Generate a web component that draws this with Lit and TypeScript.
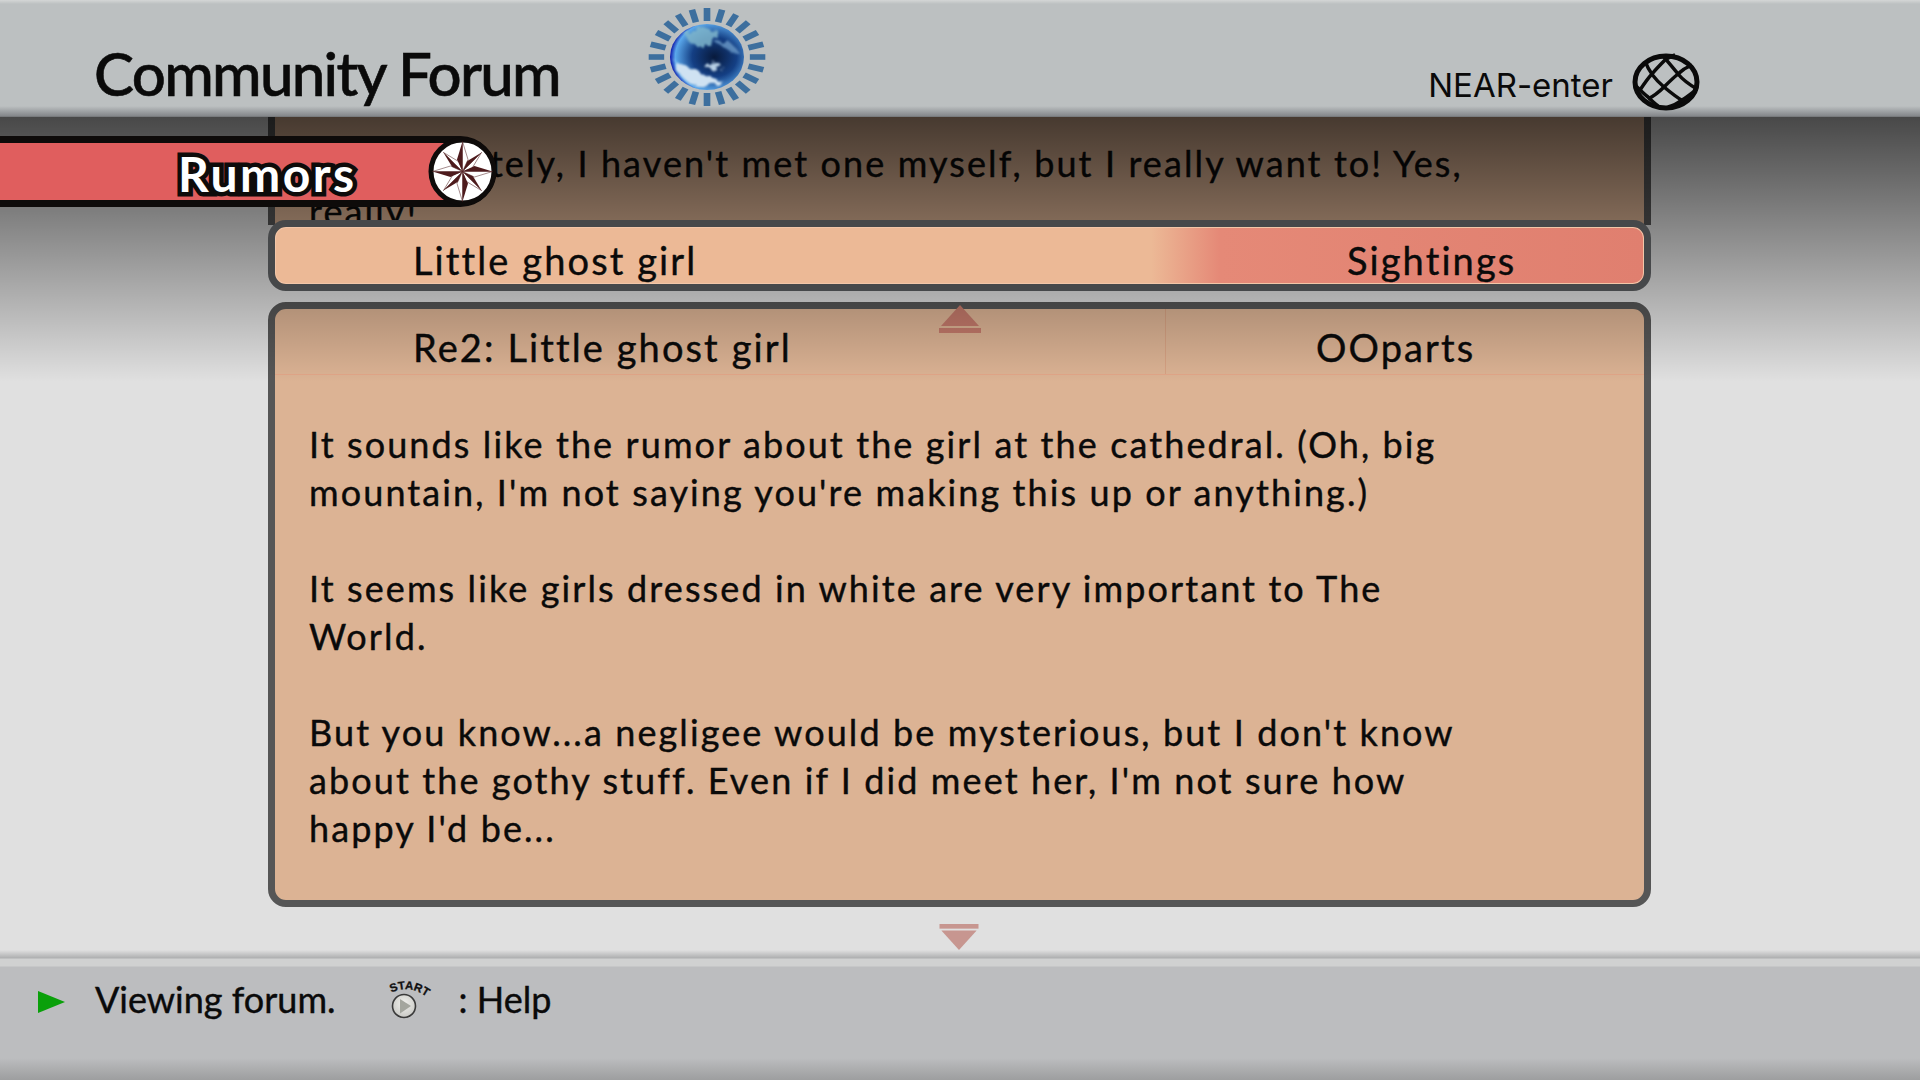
import { LitElement, html, css, svg } from 'lit';
import { customElement } from 'lit/decorators.js';

const range = (n: number) => Array.from({ length: n }, (_, i) => i);

// 24 ticks round the earth logo, squashed to an ellipse by the group scale
const earthRays = range(24).map((i) => {
  const a = (i * 360) / 24;
  return svg`<rect x="-2.800" y="-49" width="5.600" height="13" fill="#3d6f9e" transform="rotate(${a})"></rect>`;
});

// compass star: two-tone blades, diagonals first so the long axes sit on top
const blade = (i: number) => {
  const long = i % 2 === 0;
  const r = long ? 30 : 27;
  const w = long ? 5.5 : 4.5;
  const h = long ? 12 : 9;
  return svg`<g transform="rotate(${i * 45})">
    <path d="M0 0 L0 ${-r} L${w} ${-h} Z" fill="#fff" stroke="#4d1a1c" stroke-width=".5"></path>
    <path d="M0 0 L0 ${-r} L${-w} ${-h} Z" fill="#4d1a1c"></path>
  </g>`;
};
const compassBlades = [1, 3, 5, 7, 0, 2, 4, 6].map(blade);

@customElement('app-root')
export class AppRoot extends LitElement {
  static styles = css`
    :host {
      display: block;
      width: 1920px;
      height: 1080px;
      font-family: Lato, 'Noto Sans', sans-serif;
      color: #0a0a0a;
    }
    .stage {
      position: relative;
      width: 1920px;
      height: 1080px;
      overflow: hidden;
      display: flex;
      flex-direction: column;
      background: #e0e0e0;
    }

    /* Header */
    .header {
      position: relative;
      z-index: 5;
      flex: 0 0 117px;
      box-sizing: border-box;
      padding: 0 0 0 94px;
      display: flex;
      align-items: flex-start;
      background: linear-gradient(#d4d6d6 0, #bcc0c1 4px, #bcc0c1 106px, #84878a 116px, #6c6e70 117px);
    }
    .title {
      font-size: 60px;
      font-weight: 500;
      line-height: 74px;
      margin-top: 36px;
      width: 554px;
      flex: none;
      letter-spacing: -1.7px;
      -webkit-text-stroke: 0.6px #0a0a0a;
    }
    .earth {
      width: 118px;
      height: 100px;
      margin-top: 7px;
      flex: none;
    }
    .near {
      margin-left: auto;
      display: flex;
      align-items: center;
      margin-top: 52px;
      margin-right: 219px;
      gap: 18px;
      font-family: Inter, sans-serif;
      font-size: 33px;
    }
    .near span {
      padding-top: 5px;
    }
    .near svg {
      width: 70px;
      height: 60px;
    }

    /* Main column */
    .main {
      position: relative;
      flex: 1;
      min-height: 0;
      box-sizing: border-box;
      padding-left: 268px;
      display: flex;
      flex-direction: column;
    }
    .shade {
      position: absolute;
      z-index: 2;
      left: 0;
      right: 0;
      top: 0;
      height: 265px;
      background: linear-gradient(rgba(0, 0, 0, 0.68), rgba(0, 0, 0, 0));
      pointer-events: none;
    }
    .column {
      width: 1383px;
      display: flex;
      flex-direction: column;
    }
    .prev {
      height: 108px;
      margin-bottom: -5px;
      box-sizing: border-box;
      padding: 22px 160px 0 34px;
      background: #dcb394;
      border: solid #565656;
      border-width: 0 7px;
      overflow: hidden;
    }
    .text {
      font-size: 36px;
      line-height: 48px;
      letter-spacing: 2.1px;
      margin: 0;
      -webkit-text-stroke: 0.4px #0a0a0a;
    }
    .row {
      display: flex;
      align-items: center;
      font-size: 38px;
      letter-spacing: 2.1px;
      -webkit-text-stroke: 0.4px #0a0a0a;
    }
    .row .subject {
      flex: 0 0 890px;
      padding-left: 138px;
      box-sizing: border-box;
    }
    .selected {
      position: relative;
      z-index: 3;
      height: 71px;
      box-sizing: border-box;
      padding-top: 8px;
      border: 7px solid #46484a;
      border-radius: 18px;
      background: linear-gradient(90deg, #ecb996 0, #ecb996 64%, #e58977 69%, #e07f6f 100%);
      box-shadow: inset 0 0 0 1px #f2c6a8;
    }
    .selected .board {
      padding-left: 182px;
    }
    .gap {
      height: 11px;
    }
    .post {
      position: relative;
      height: 605px;
      box-sizing: border-box;
      border: 7px solid #565656;
      border-radius: 18px;
      background: #dcb394;
    }
    .post .row {
      height: 66px;
      box-sizing: border-box;
      border-bottom: 1px solid #e2a688;
    }
    .post .subject {
      height: 100%;
      box-sizing: border-box;
      display: flex;
      align-items: center;
      padding-top: 10px;
      flex: 0 0 891px;
      border-right: 1px solid #d7a283;
    }
    .post .board {
      padding: 10px 0 0 150px;
    }
    .body {
      padding: 45px 160px 0 34px;
    }
    .body p {
      margin: 0 0 48px;
    }
    .arrow-up {
      position: absolute;
      left: 664px;
      top: -4px;
      width: 42px;
      height: 28px;
    }
    .arrow-down {
      align-self: flex-start;
      margin: 17px 0 0 670px;
      width: 42px;
      height: 28px;
    }

    /* Rumors tag */
    .tag {
      position: absolute;
      z-index: 4;
      left: 0;
      top: 136px;
      width: 496px;
      height: 71px;
      box-sizing: border-box;
      border: solid #0e0b0a;
      border-width: 7px 7px 7px 0;
      border-radius: 0 36px 36px 0;
      background: #e05e5e;
      display: flex;
      align-items: center;
    }
    .tag span {
      margin: 3px 0 0 178px;
      font-size: 48px;
      font-weight: 700;
      color: #fff;
      -webkit-text-stroke: 9px #0e0b0a;
      paint-order: stroke fill;
      letter-spacing: 2.500px;
    }
    .tag svg {
      position: absolute;
      right: -7px;
      top: -7px;
      width: 71px;
      height: 71px;
    }

    /* Footer */
    .footer {
      position: relative;
      z-index: 3;
      flex: 0 0 130px;
      box-sizing: border-box;
      padding: 0 0 33px 38px;
      display: flex;
      align-items: center;
      font-size: 36px;
      -webkit-text-stroke: 0.4px #0a0a0a;
      background: linear-gradient(#e0e0e0 0, #aeafb0 8px, #d0d1d1 9px, #d0d1d1 16px, #bcbdbf 17px, #bcbdbf 108px, #9d9e9f 130px);
    }
    .footer .play {
      width: 27px;
      height: 22px;
      flex: none;
      margin: 6px 30px 0 0;
    }
    .footer .start {
      width: 50px;
      height: 46px;
      margin: 4px 26px 0 47px;
      flex: none;
      -webkit-text-stroke: 0;
    }
  `;

  render() {
    return html`
      <div class="stage">
        <header class="header">
          <div class="title">Community Forum</div>
          <svg class="earth" viewBox="-59 -50 118 100" preserveAspectRatio="none">
            <defs>
              <radialGradient id="sea" cx="0.6" cy="0.5" r="0.6">
                <stop offset="0" stop-color="#081a3c"></stop>
                <stop offset="0.5" stop-color="#143f84"></stop>
                <stop offset="0.88" stop-color="#5aa8ec"></stop>
                <stop offset="1" stop-color="#0a14a8"></stop>
              </radialGradient>
              <filter id="cloud" x="-20%" y="-20%" width="140%" height="140%">
                <feTurbulence type="fractalNoise" baseFrequency="0.11" numOctaves="3" seed="7"></feTurbulence>
                <feDisplacementMap in="SourceGraphic" scale="14"></feDisplacementMap>
                <feGaussianBlur stdDeviation="1"></feGaussianBlur>
              </filter>
              <clipPath id="globe"><ellipse rx="36" ry="32"></ellipse></clipPath>
            </defs>
            <g transform="scale(1.19 1)">${earthRays}</g>
            <ellipse rx="37" ry="33" fill="url(#sea)"></ellipse>
            <g clip-path="url(#globe)">
              <g filter="url(#cloud)">
                <path d="M-22 -24 Q-6 -34 12 -26 Q6 -16 -8 -10 Q-18 -10 -22 -24Z" fill="#7fb6cc" opacity=".85"></path>
                <path d="M-34 2 Q-30 20 -14 28 Q2 32 16 24 Q0 20 -12 12 Q-26 8 -34 2Z" fill="#cfe2f2"></path>
                <path d="M-4 8 Q8 2 16 10 Q6 16 -4 8Z" fill="#b7cfe4"></path>
                <path d="M8 -14 Q24 -20 30 -6 Q20 -6 8 -14Z" fill="#6a9ac8" opacity=".8"></path>
              </g>
            </g>
          </svg>
          <div class="near">
            <span>NEAR-enter</span>
            <svg viewBox="-35 -30 70 60" fill="none" stroke="#0a0a0a" stroke-width="3.500">
              <ellipse rx="31" ry="26" stroke-width="5"></ellipse>
              <path d="M-21 -21 C-17 -10 -8 0 -2 5 C4 10 10 15 17 19"></path>
              <path d="M-3 -26 C2 -20 8 -13 12 -8 C17 -2 24 3 31 7"></path>
              <path d="M-31 3 C-26 8 -22 12 -18 15 C-15 18 -12 21 -8 24"></path>
              <path d="M-26 8 C-22 2 -18 -4 -14 -8 C-10 -13 -5 -18 -1 -22 C2 -24 5 -26 9 -27"></path>
              <path d="M-18 17 C-12 14 -7 10 -2 5 C3 0 7 -4 12 -8 C16 -12 21 -15 26 -17"></path>
              <path d="M2 25 C7 24 12 21 16 18 C21 15 26 11 31 7"></path>
            </svg>
          </div>
        </header>

        <main class="main">
          <div class="shade"></div>
          <div class="column">
            <div class="prev">
              <p class="text">Unfortunately, I haven't met one myself, but I really want to! Yes, really!</p>
            </div>
            <div class="selected row">
              <div class="subject">Little ghost girl</div>
              <div class="board">Sightings</div>
            </div>
            <div class="gap"></div>
            <div class="post">
              <div class="row">
                <div class="subject">Re2: Little ghost girl</div>
                <div class="board">OOparts</div>
              </div>
              <svg class="arrow-up" viewBox="0 0 42 28">
                <path d="M21 0 L40 21 H2 Z" fill="#c47a6b"></path>
                <rect x="0" y="23" width="42" height="5" fill="#c47a6b"></rect>
              </svg>
              <div class="body text">
                <p>It sounds like the rumor about the girl at the cathedral. (Oh, big mountain, I'm not saying you're making this up or anything.)</p>
                <p>It seems like girls dressed in white are very important to The World.</p>
                <p>But you know...a negligee would be mysterious, but I don't know about the gothy stuff. Even if I did meet her, I'm not sure how happy I'd be...</p>
              </div>
            </div>
          </div>
          <svg class="arrow-down" viewBox="0 0 42 28">
            <rect x="0" y="0" width="42" height="5" fill="#c79690"></rect>
            <path d="M21 28 L40 7 H2 Z" fill="#c79690"></path>
          </svg>
        </main>

        <div class="tag">
          <span>Rumors</span>
          <svg viewBox="-35.500 -35.500 71 71">
            <circle cx="2" r="31.500" fill="#fff" stroke="#0e0b0a" stroke-width="5"></circle>
            <g transform="translate(2 0)">${compassBlades}</g>
          </svg>
        </div>

        <footer class="footer">
          <svg class="play" viewBox="0 0 27 22"><path d="M0 0 L27 11 L0 22 Z" fill="#0aa00a"></path></svg>
          <span>Viewing forum.</span>
          <svg class="start" viewBox="0 0 50 46">
            <defs>
              <path id="arc" d="M8 15 Q26 6 44 19"></path>
              <radialGradient id="btn" cx="0.5" cy="0.4" r="0.6">
                <stop offset="0" stop-color="#f2f2ee"></stop>
                <stop offset="1" stop-color="#c8c8c4"></stop>
              </radialGradient>
            </defs>
            <text font-family="Liberation Sans, sans-serif" font-size="11.500" font-weight="700" fill="#111" stroke="#111" stroke-width=".3">
              <textPath href="#arc" startOffset="50%" text-anchor="middle">START</textPath>
            </text>
            <circle cx="21" cy="28" r="11.500" fill="url(#btn)" stroke="#3a3a3a" stroke-width="1.600"></circle>
            <path d="M17 21 L28 28 L17 35.500 Z" fill="#a4a69e"></path>
          </svg>
          <span>: Help</span>
        </footer>
      </div>
    `;
  }
}
